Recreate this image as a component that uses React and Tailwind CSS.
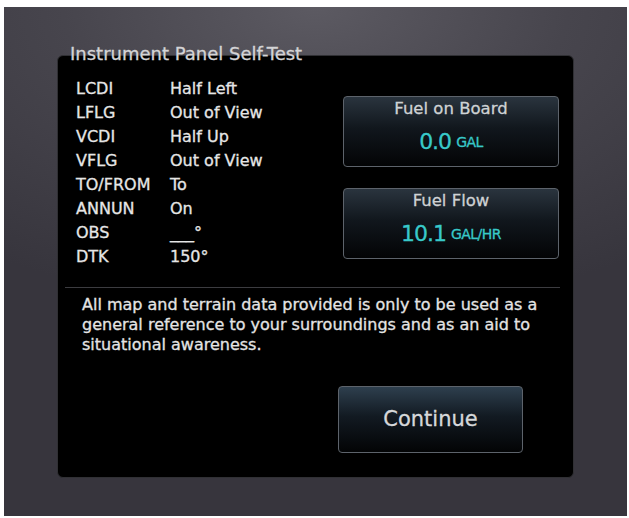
import React from "react";

const rows = [
  ["LCDI", "Half Left"],
  ["LFLG", "Out of View"],
  ["VCDI", "Half Up"],
  ["VFLG", "Out of View"],
  ["TO/FROM", "To"],
  ["ANNUN", "On"],
  ["OBS", "___°"],
  ["DTK", "150°"],
];

function InfoBox({ title, value, unit }) {
  return (
    <div className="w-[216px] h-[71px] rounded-[4px] border border-[#5d636b] bg-[linear-gradient(to_bottom,#2a343e_0%,#11171d_45%,#030405_100%)] flex flex-col items-center">
      <div className="h-[24px] flex items-center text-[16.5px] text-[#cfd2d4]">{title}</div>
      <div className="h-[40px] flex items-center text-[#38c9c9]">
        <span className="text-[22px] tracking-[-1px]">{value}</span>
        <span className="text-[14px] ml-[5px] mt-[3px] tracking-[-0.5px]">{unit}</span>
      </div>
    </div>
  );
}

export default function App() {
  return (
    <div
      className="w-[629px] h-[518px] bg-white [-webkit-text-stroke:0.3px_currentColor]"
      style={{ fontFamily: '"DejaVu Sans", "Liberation Sans", sans-serif' }}
    >
      <div className="ml-[4px] pt-[7px]">
        <div className="w-[623px] h-[509px] bg-[radial-gradient(ellipse_90%_60%_at_50%_0%,#5c5a62_0%,#47454d_45%,#37353d_100%)] pl-[53px] pt-[48px]">
          <div className="relative w-[517px] h-[423px] rounded-[6px] bg-black border border-[#303034] flex flex-col">
            <div className="absolute left-[12px] top-[-13px] text-[18px] leading-[22px] text-[#d4d4d6]">
              Instrument Panel Self-Test
            </div>
            <div className="h-[231px] flex pl-[18px] pr-[14px]">
              <div className="mt-[21px] flex flex-col">
                {rows.map(([k, v]) => (
                  <div key={k} className="h-[24px] flex items-center text-[16px] text-[#e6e6e6]">
                    <span className="w-[94px]">{k}</span>
                    <span>{v}</span>
                  </div>
                ))}
              </div>
              <div className="ml-auto mt-[40px] flex flex-col gap-[21px]">
                <InfoBox title="Fuel on Board" value="0.0" unit="GAL" />
                <InfoBox title="Fuel Flow" value="10.1" unit="GAL/HR" />
              </div>
            </div>
            <div className="h-px bg-[#3c3c40] ml-[7px] mr-[13px]" />
            <div className="pl-[24px] mt-[7px] text-[16px] leading-[20px] text-[#e4e4e4]">
              All map and terrain data provided is only to be used as a<br />
              general reference to your surroundings and as an aid to<br />
              situational awareness.
            </div>
            <div className="ml-[280px] mt-[31px] w-[185px] h-[67px] rounded-[4px] border border-[#5d636b] bg-[linear-gradient(to_bottom,#2e3f4e_0%,#121a22_45%,#030405_100%)] flex items-center justify-center text-[21px] text-[#d6d8da]">
              Continue
            </div>
          </div>
        </div>
      </div>
    </div>
  );
}
